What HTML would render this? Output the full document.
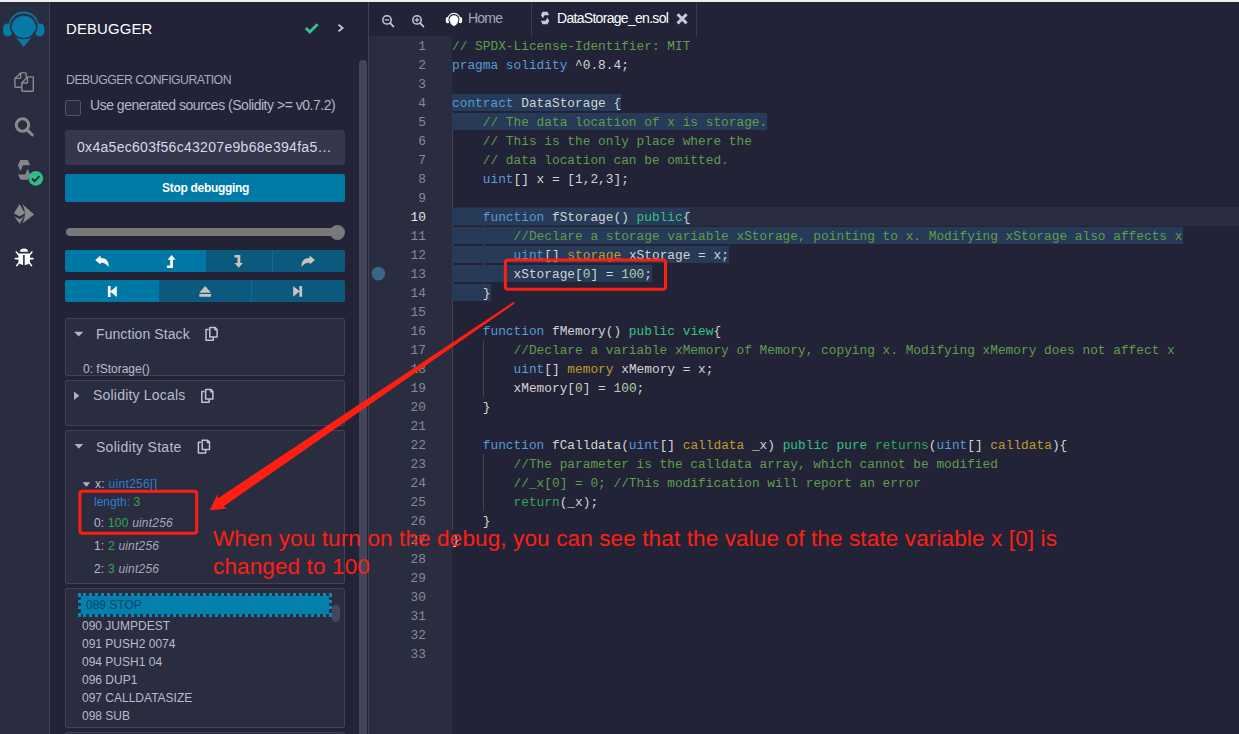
<!DOCTYPE html>
<html><head><meta charset="utf-8">
<style>
*{box-sizing:border-box;margin:0;padding:0}
html,body{width:1239px;height:734px;overflow:hidden;background:#222336;font-family:"Liberation Sans",sans-serif;position:relative}
.a{position:absolute}
#topstrip{left:0;top:0;width:1239px;height:2px;background:#efefec}
#iconbar{left:0;top:2px;width:49px;height:732px;background:#2a2c3f}
#iconbar-b{left:49px;top:2px;width:1px;height:732px;background:#3b3e52}
#side{left:50px;top:2px;width:318px;height:732px;background:#222336}
#divider{left:368px;top:2px;width:1px;height:732px;background:#3f4455}
#sscroll{left:359px;top:60px;width:8px;height:680px;border-radius:4px;background:#42465c}
.t{position:absolute;white-space:nowrap;line-height:1}
/* editor */
#tabbar{left:369px;top:2px;width:870px;height:34px;background:#222336}
#gutter{left:369px;top:36px;width:83px;height:698px;background:#2a2c3f}
#curline{left:452px;top:207px;width:787px;height:19px;background:#2a2c3f}
.sel{position:absolute;left:452px;height:17px;background:#273a57}
.ln{position:absolute;left:452px;height:19px;line-height:19px;font-family:"Liberation Mono",monospace;font-size:12.82px;white-space:pre;color:#d4d4d4}
.num{position:absolute;left:369px;width:57px;height:19px;line-height:19px;text-align:right;font-family:"Liberation Mono",monospace;font-size:12.82px;color:#858a9c}
.num.cur{color:#e6e6e6}
.guide{position:absolute;width:1px;background:#46463d}
.cc{color:#5f9e4b}.ck{color:#569cd6}.cp{color:#33c283}.cr{color:#30a850}.cs{color:#c09a2c}.cn{color:#b5cea8}.ct{color:#d4d4d4}
.card{position:absolute;left:65px;width:280px;border:1px solid #3f4455;border-radius:2px;background:#2a2c3f;overflow:hidden}
.btn{position:absolute;height:22px}
</style></head>
<body>
<div class="a" id="topstrip"></div>
<div class="a" id="iconbar"></div>
<div class="a" id="iconbar-b"></div>
<div class="a" id="side"></div>
<div class="a" id="divider"></div>

<!-- side panel content -->
<div class="t" style="left:66px;top:22px;font-size:14.9px;color:#fff;letter-spacing:0.15px">DEBUGGER</div>
<div class="t" style="left:66px;top:74px;font-size:12.3px;color:#a9aac2;letter-spacing:-0.5px">DEBUGGER CONFIGURATION</div>
<div class="a" style="left:65px;top:100px;width:16px;height:16px;border:1px solid #50536a;border-radius:2px;background:#282a3d"></div>
<div class="t" style="left:90px;top:98px;font-size:14px;color:#b5b6c9;letter-spacing:-0.48px">Use generated sources (Solidity &gt;= v0.7.2)</div>
<div class="a" style="left:65px;top:130px;width:280px;height:35px;background:#35384c;border-radius:3px"></div>
<div class="t" style="left:77px;top:140px;font-size:14px;color:#d8d9e3;letter-spacing:0.3px">0x4a5ec603f56c43207e9b68e394fa5…</div>
<div class="a" style="left:65px;top:174px;width:280px;height:28px;background:#007aa6;border-radius:2px"></div>
<div class="t" style="left:162px;top:182px;font-size:12px;font-weight:bold;color:#fff;letter-spacing:-0.3px">Stop debugging</div>

<!-- slider -->
<div class="a" style="left:66px;top:228px;width:272px;height:8px;background:#797979;border-radius:4px"></div>
<div class="a" style="left:330px;top:224.5px;width:15px;height:15px;background:#797979;border-radius:50%"></div>

<!-- button group 1 -->
<div class="a" style="left:65px;top:250px;width:141px;height:22px;background:#0078a6;border-radius:2px 0 0 2px"></div>
<div class="a" style="left:206px;top:250px;width:139px;height:22px;background:#0b5a7e;border-radius:0 2px 2px 0"></div>
<div class="a" style="left:272px;top:250px;width:1px;height:22px;background:#0f6b93"></div>
<!-- button group 2 -->
<div class="a" style="left:65px;top:280px;width:94px;height:22px;background:#0078a6;border-radius:2px 0 0 2px"></div>
<div class="a" style="left:159px;top:280px;width:186px;height:22px;background:#0b5a7e;border-radius:0 2px 2px 0"></div>
<div class="a" style="left:251px;top:280px;width:1px;height:22px;background:#0f6b93"></div>

<!-- cards -->
<div class="card" style="top:318px;height:58px"></div>
<div class="card" style="top:380px;height:46px"></div>
<div class="card" style="top:430px;height:154px"></div>
<div class="card" style="top:588px;height:140px"></div>
<div class="card" style="top:732px;height:20px"></div>

<div class="t" style="left:96px;top:327px;font-size:14px;color:#babbcc;letter-spacing:0.08px">Function Stack</div>
<div class="t" style="left:83px;top:363px;font-size:12px;color:#babbcc">0: fStorage()</div>
<div class="t" style="left:93px;top:388px;font-size:14px;color:#babbcc;letter-spacing:0.2px">Solidity Locals</div>
<div class="t" style="left:96px;top:440px;font-size:14px;color:#babbcc;letter-spacing:0.28px">Solidity State</div>

<div class="t" style="left:95px;top:478px;font-size:12px;color:#babbcc;letter-spacing:0.3px">x: <span style="color:#2f7fd1">uint256[]</span></div>
<div class="t" style="left:94px;top:496px;font-size:12px;color:#2f7fd1">length: <span style="color:#32a852">3</span></div>
<div class="t" style="left:94px;top:517px;font-size:12px;color:#babbcc;letter-spacing:0.2px">0: <span style="color:#32a852">100</span> <i style="color:#a6a7ba">uint256</i></div>
<div class="t" style="left:94px;top:539.5px;font-size:12px;color:#babbcc;letter-spacing:0.2px">1: <span style="color:#32a852">2</span> <i style="color:#a6a7ba">uint256</i></div>
<div class="t" style="left:94px;top:562.5px;font-size:12px;color:#babbcc;letter-spacing:0.2px">2: <span style="color:#32a852">3</span> <i style="color:#a6a7ba">uint256</i></div>

<!-- opcodes -->
<div class="a" style="left:78px;top:593px;width:254px;height:24px;background:#0380ab;background-clip:padding-box;border:3px dotted #0a87b3"></div>
<div class="t" style="left:86px;top:599px;font-size:12px;color:#0b456e">089 STOP</div>
<div class="a" style="left:332px;top:605px;width:8px;height:17px;border-radius:4px;background:#44475e"></div>
<div class="t" style="left:82px;top:620px;font-size:12px;color:#babbcc">090 JUMPDEST</div>
<div class="t" style="left:82px;top:638px;font-size:12px;color:#babbcc">091 PUSH2 0074</div>
<div class="t" style="left:82px;top:656px;font-size:12px;color:#babbcc">094 PUSH1 04</div>
<div class="t" style="left:82px;top:674px;font-size:12px;color:#babbcc">096 DUP1</div>
<div class="t" style="left:82px;top:692px;font-size:12px;color:#babbcc">097 CALLDATASIZE</div>
<div class="t" style="left:82px;top:710px;font-size:12px;color:#babbcc">098 SUB</div>

<div class="a" id="sscroll"></div>

<!-- editor -->
<div class="a" id="tabbar"></div>
<div class="a" style="left:531px;top:3px;width:1px;height:33px;background:#3a3d50"></div>
<div class="a" style="left:696px;top:3px;width:1px;height:33px;background:#3a3d50"></div>
<div class="t" style="left:468px;top:11px;font-size:14px;color:#a2a3bd;letter-spacing:-0.8px">Home</div>
<div class="t" style="left:557px;top:11px;font-size:14px;color:#ffffff;letter-spacing:-0.7px">DataStorage_en.sol</div>

<div class="a" id="gutter"></div>
<div class="a" id="curline"></div>
<div class="guide" style="left:452px;top:112px;height:418px"></div>
<div class="guide" style="left:483px;top:226px;height:57px"></div>
<div class="guide" style="left:483px;top:340px;height:57px"></div>
<div class="guide" style="left:483px;top:454px;height:57px"></div>
<div class="sel" style="top:94px;width:169.2px"></div>
<div class="sel" style="top:113px;width:315.3px"></div>
<div class="sel" style="top:208px;width:238.4px"></div>
<div class="sel" style="top:227px;width:730.6px"></div>
<div class="sel" style="top:246px;width:276.8px"></div>
<div class="sel" style="top:265px;width:199.9px"></div>
<div class="sel" style="top:284px;width:38.5px"></div>
<div class="num" style="top:37px">1</div>
<div class="num" style="top:56px">2</div>
<div class="num" style="top:75px">3</div>
<div class="num" style="top:94px">4</div>
<div class="num" style="top:113px">5</div>
<div class="num" style="top:132px">6</div>
<div class="num" style="top:151px">7</div>
<div class="num" style="top:170px">8</div>
<div class="num" style="top:189px">9</div>
<div class="num cur" style="top:208px">10</div>
<div class="num" style="top:227px">11</div>
<div class="num" style="top:246px">12</div>
<div class="num" style="top:265px">13</div>
<div class="num" style="top:284px">14</div>
<div class="num" style="top:303px">15</div>
<div class="num" style="top:322px">16</div>
<div class="num" style="top:341px">17</div>
<div class="num" style="top:360px">18</div>
<div class="num" style="top:379px">19</div>
<div class="num" style="top:398px">20</div>
<div class="num" style="top:417px">21</div>
<div class="num" style="top:436px">22</div>
<div class="num" style="top:455px">23</div>
<div class="num" style="top:474px">24</div>
<div class="num" style="top:493px">25</div>
<div class="num" style="top:512px">26</div>
<div class="num" style="top:531px">27</div>
<div class="num" style="top:550px">28</div>
<div class="num" style="top:569px">29</div>
<div class="num" style="top:588px">30</div>
<div class="num" style="top:607px">31</div>
<div class="num" style="top:626px">32</div>
<div class="num" style="top:645px">33</div>
<div class="ln" style="top:37px"><span class="cc">// SPDX-License-Identifier: MIT</span></div>
<div class="ln" style="top:56px"><span class="ck">pragma</span><span class="ct"> </span><span class="ck">solidity</span><span class="ct"> ^0.8.4;</span></div>
<div class="ln" style="top:75px"></div>
<div class="ln" style="top:94px"><span class="ck">contract</span><span class="ct"> DataStorage {</span></div>
<div class="ln" style="top:113px"><span class="cc">    // The data location of x is storage.</span></div>
<div class="ln" style="top:132px"><span class="cc">    // This is the only place where the</span></div>
<div class="ln" style="top:151px"><span class="cc">    // data location can be omitted.</span></div>
<div class="ln" style="top:170px"><span class="ct">    </span><span class="ck">uint</span><span class="ct">[] x = [1,2,3];</span></div>
<div class="ln" style="top:189px"></div>
<div class="ln" style="top:208px"><span class="ct">    </span><span class="ck">function</span><span class="ct"> fStorage() </span><span class="cp">public</span><span class="ct">{</span></div>
<div class="ln" style="top:227px"><span class="cc">        //Declare a storage variable xStorage, pointing to x. Modifying xStorage also affects x</span></div>
<div class="ln" style="top:246px"><span class="ct">        </span><span class="ck">uint</span><span class="ct">[] </span><span class="cs">storage</span><span class="ct"> xStorage = x;</span></div>
<div class="ln" style="top:265px"><span class="ct">        xStorage[</span><span class="cn">0</span><span class="ct">] = </span><span class="cn">100</span><span class="ct">;</span></div>
<div class="ln" style="top:284px"><span class="ct">    }</span></div>
<div class="ln" style="top:303px"></div>
<div class="ln" style="top:322px"><span class="ct">    </span><span class="ck">function</span><span class="ct"> fMemory() </span><span class="cp">public</span><span class="ct"> </span><span class="cp">view</span><span class="ct">{</span></div>
<div class="ln" style="top:341px"><span class="cc">        //Declare a variable xMemory of Memory, copying x. Modifying xMemory does not affect x</span></div>
<div class="ln" style="top:360px"><span class="ct">        </span><span class="ck">uint</span><span class="ct">[] </span><span class="cs">memory</span><span class="ct"> xMemory = x;</span></div>
<div class="ln" style="top:379px"><span class="ct">        xMemory[</span><span class="cn">0</span><span class="ct">] = </span><span class="cn">100</span><span class="ct">;</span></div>
<div class="ln" style="top:398px"><span class="ct">    }</span></div>
<div class="ln" style="top:417px"></div>
<div class="ln" style="top:436px"><span class="ct">    </span><span class="ck">function</span><span class="ct"> fCalldata(</span><span class="ck">uint</span><span class="ct">[] </span><span class="cs">calldata</span><span class="ct"> _x) </span><span class="cp">public</span><span class="ct"> </span><span class="cp">pure</span><span class="ct"> </span><span class="cr">returns</span><span class="ct">(</span><span class="ck">uint</span><span class="ct">[] </span><span class="cs">calldata</span><span class="ct">){</span></div>
<div class="ln" style="top:455px"><span class="cc">        //The parameter is the calldata array, which cannot be modified</span></div>
<div class="ln" style="top:474px"><span class="cc">        //_x[</span><span class="cc">0</span><span class="cc">] = 0; //This modification will report an error</span></div>
<div class="ln" style="top:493px"><span class="ct">        </span><span class="cr">return</span><span class="ct">(_x);</span></div>
<div class="ln" style="top:512px"><span class="ct">    }</span></div>
<div class="ln" style="top:531px"><span class="ct">}</span></div>
<div class="ln" style="top:550px"></div>
<div class="ln" style="top:569px"></div>
<div class="ln" style="top:588px"></div>
<div class="ln" style="top:607px"></div>
<div class="ln" style="top:626px"></div>
<div class="ln" style="top:645px"></div>

<svg class="a" style="left:0;top:0;z-index:5" width="1239" height="734" viewBox="0 0 1239 734">
<!-- logo -->
<g fill="#0979a6">
 <rect x="3.1" y="23.4" width="9.4" height="12.8" rx="4.2"/>
 <rect x="34.9" y="23.4" width="9.4" height="12.8" rx="4.2"/>
 <path d="M 10,26.4 A 13.7 13.7 0 0 1 37.4,26.4" fill="none" stroke="#0979a6" stroke-width="2.6"/>
 <polygon points="13.2,34 34.2,34 23.7,47"/>
 <ellipse cx="23.7" cy="26.4" rx="13.1" ry="12.1" fill="none" stroke="#2a2c3f" stroke-width="1.4"/>
 <ellipse cx="23.7" cy="26.4" rx="11.9" ry="10.9"/>
 <path d="M 12,26.4 A 11.7 10.7 0 0 1 35.4,26.4" fill="none" stroke="#2a2c3f" stroke-width="1.1" stroke-dasharray="1.1 2.4"/>
</g>
<!-- files icon -->
<g fill="none" stroke="#8c8c8c" stroke-width="1.4" stroke-linejoin="round">
 <path d="M21.5,87.2 H15.6 Q14.9,87.2 14.9,86.5 V78.4 L20.6,72.9 H25.4 Q26.1,72.9 26.1,73.6 V77.4"/>
 <path d="M14.9,78.4 H19.9 Q20.6,78.4 20.6,77.7 V72.9"/>
 <path d="M21.8,83 L27.5,76.9 H32.6 Q33.3,76.9 33.3,77.6 V90.6 Q33.3,91.3 32.6,91.3 H22.5 Q21.8,91.3 21.8,90.6 Z"/>
 <path d="M21.8,83 H26.8 Q27.5,83 27.5,82.3 V76.9"/>
</g>
<!-- search -->
<g fill="none" stroke="#8a8a8a" stroke-width="3" stroke-linecap="round">
 <circle cx="22.5" cy="125" r="6.2"/>
 <path d="M27.3,130.1 L32.3,134.9"/>
</g>
<!-- solidity -->
<g fill="#858585">
 <polygon points="20.3,160 27.7,160 30.2,165.2 23,165.2 20.6,171 17.8,165.5"/>
 <polygon points="18,174.4 25.2,174.4 27.6,168.8 30.2,174.4 27.7,179.8 20.5,179.8"/>
</g>
<circle cx="35.8" cy="178.4" r="7.3" fill="#30bb88"/>
<path d="M32,178.6 L34.6,181.2 L39.6,176.2" fill="none" stroke="#222336" stroke-width="1.8"/>
<!-- deploy -->
<g fill="#8a8a8a">
 <polygon points="19.6,203.9 13.9,213.3 19.6,216.4 24.9,213.2"/>
 <polygon points="14.2,216.2 19.6,219.2 24.2,216.2 19.6,223.7"/>
 <path d="M22.3,204.1 L34.1,214.6 L22.3,223.5 Q27.5,214 22.3,204.1 Z"/>
</g>
<!-- bug -->
<g fill="#ffffff">
 <path d="M20,251.8 A4 3.4 0 0 1 28,251.8 Z"/>
 <path d="M18.4,253.4 H30 V260 Q30,264.9 25,264.9 H23.4 Q18.4,264.9 18.4,260 Z"/>
</g>
<rect x="23.1" y="255" width="1.6" height="10" fill="#2a2c3f"/>
<g stroke="#ffffff" stroke-width="1.6" stroke-linecap="round">
 <path d="M16.3,252 L18.8,255"/><path d="M31.9,252 L29.5,255"/>
 <path d="M15.3,258.6 H18.6"/><path d="M30,258.6 H32.9"/>
 <path d="M16.8,265.6 L19,262.6"/><path d="M31.5,265.6 L29.3,262.6"/>
</g>
<!-- header check/chevron -->
<path d="M305.8,28 L309.8,32 L317.6,24.2" fill="none" stroke="#2fc48d" stroke-width="2.8"/>
<path d="M338.5,24.6 L342.6,28 L338.5,31.4" fill="none" stroke="#c8c9d8" stroke-width="1.8"/>
<!-- button icons -->
<path d="M95.2,260 L100.6,255.5 V257.9 C105.9,257.9 109.6,261.2 108.4,267.2 C107.3,264.6 105,262.7 100.6,262.7 V264.5 Z" fill="#fff"/>
<path d="M171.6,255.1 L175.6,259.8 H173 V268 H167.1 V265.5 H170.2 V259.8 H167.6 Z" fill="#fff"/>
<path d="M234.5,254.9 H240.3 V263 H242.9 L238.7,267.8 L234.5,263 H237.5 V257.5 H234.5 Z" fill="#c8c5be"/>
<path d="M315,260 L309.6,255.5 V257.9 C304.3,257.9 300.6,261.2 301.8,267.2 C302.9,264.6 305.2,262.7 309.6,262.7 V264.5 Z" fill="#c8c5be"/>
<path d="M107.9,286 H110.6 V297 H107.9 Z M116.8,286 V297 L110.3,291.5 Z" fill="#fff"/>
<path d="M199.3,292.8 H211 L205.15,286.1 Z M199.3,294.1 H211 V296.8 H199.3 Z" fill="#c8c5be"/>
<path d="M293.2,285.9 V296.8 L299.7,291.35 Z M299.4,285.9 H302.1 V296.8 H299.4 Z" fill="#c8c5be"/>
<!-- carets -->
<polygon points="74,331.8 83.5,331.8 78.75,336.6" fill="#aeb0cc"/>
<polygon points="74,391.6 79.4,395.8 74,400" fill="#aeb0cc"/>
<polygon points="74.6,444 83.1,444 78.85,448.8" fill="#aeb0cc"/>
<polygon points="82.5,482.3 90.3,482.3 86.4,486.8" fill="#aeb0cc"/>
<!-- copy icons -->
<g>
 <g id="cp1" fill="none" stroke="#c0c2d6" stroke-width="1.5" stroke-linejoin="round">
  <path d="M208.7,329.6 H206 V340.3 H213.3 V337.3"/>
  <path d="M209.8,327.6 H215.2 L217.1,329.5 V337 H209.8 Z"/>
  <path d="M215,327.6 V329.8 H217.1"/>
 </g>
</g>
<use href="#cp1" x="-4.2" y="62"/>
<use href="#cp1" x="-7.6" y="112.6"/>
<!-- tab icons -->
<g fill="none" stroke="#c3c8e6" stroke-width="1.5" stroke-linecap="round">
 <circle cx="387" cy="19.9" r="4.2"/><path d="M390.2,23.1 L393.4,26.5" stroke-width="1.8"/><path d="M385.2,19.9 H388.8" stroke-width="1.2"/>
 <circle cx="417" cy="19.9" r="4.2"/><path d="M420.2,23.1 L423.4,26.5" stroke-width="1.8"/><path d="M415.2,19.9 H418.8 M417,18.1 V21.7" stroke-width="1.2"/>
</g>
<g>
 <path d="M447.6,19.8 A6.35 6.35 0 0 1 460.3,19.8" fill="none" stroke="#fff" stroke-width="1.2"/>
 <rect x="445.8" y="17" width="3.7" height="6.2" rx="1.8" fill="#fff"/>
 <rect x="458.4" y="17" width="3.7" height="6.2" rx="1.8" fill="#fff"/>
 <circle cx="453.95" cy="19.7" r="5.5" fill="#222336"/>
 <polygon points="449.8,23.2 458.1,23.2 453.95,26.2" fill="#fff"/>
 <circle cx="453.95" cy="19.7" r="4.5" fill="#fff"/>
</g>
<g fill="#c8cadc">
 <polygon points="542.6,11.7 547.4,11.7 549.2,15.2 544.5,15.2 542.8,18.3 540.9,15"/>
 <polygon points="540.9,20.7 545.6,20.7 547.3,17.6 549.2,20.9 547.4,24.2 542.6,24.2"/>
</g>
<path d="M677.6,14.3 L686.6,23.4 M686.6,14.3 L677.6,23.4" stroke="#c8cadc" stroke-width="3"/>
<!-- breakpoint -->
<circle cx="378.4" cy="273.6" r="6.8" fill="#386785"/>
</svg>



<!-- annotations -->
<svg class="a" style="left:0;top:0;z-index:10" width="1239" height="734" viewBox="0 0 1239 734">
<rect x="79.9" y="491.2" width="116.8" height="42" rx="2.5" fill="none" stroke="#ff1f12" stroke-width="3"/>
<rect x="505.4" y="260" width="160.1" height="29.3" rx="2.5" fill="none" stroke="#ff1f12" stroke-width="3"/>
<polygon points="513.0,302.3 217.6,498.4 217.5,494.1 209.8,510.3 227.4,508.5 223.4,506.5 514.2,303.9" fill="#ff1f12"/>
<circle cx="513.6" cy="303.1" r="0.9" fill="#ff1f12"/>
</svg>
<div class="t" id="ann1" style="left:213px;top:527.6px;font-size:22.5px;color:#ff1f12;z-index:11;letter-spacing:0.13px">When you turn on the debug, you can see that the value of the state variable x [0] is</div>
<div class="t" id="ann2" style="left:213px;top:555.5px;font-size:22.5px;color:#ff1f12;z-index:11;letter-spacing:0.13px">changed to 100</div>
</body></html>
